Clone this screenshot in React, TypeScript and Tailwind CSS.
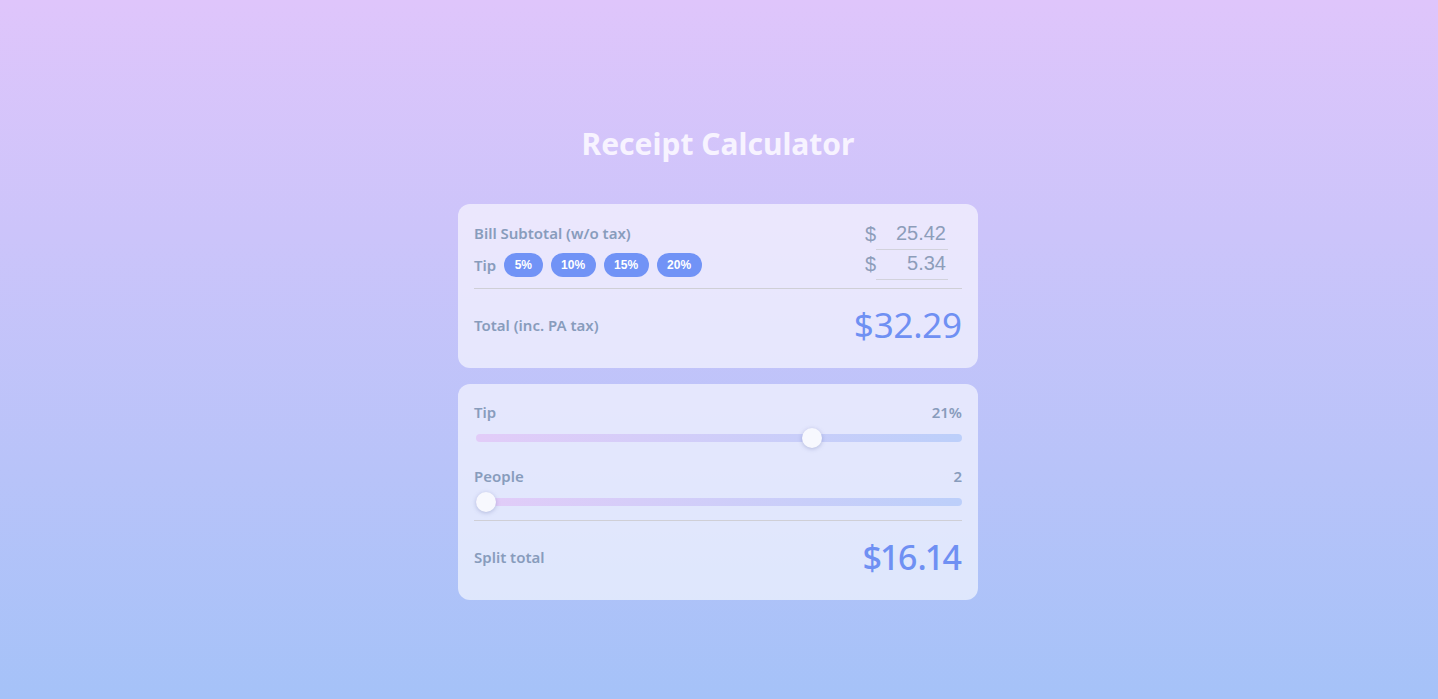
import { useState } from "react";

const TAX = 0.06;
const PRESETS = [5, 10, 15, 20];

const rangeCls =
  "ml-0.5 w-full h-2 rounded-full appearance-none cursor-pointer bg-[linear-gradient(to_right,#e2ccf8,#bccffa)] outline-none " +
  "[&::-webkit-slider-thumb]:appearance-none [&::-webkit-slider-thumb]:w-5 [&::-webkit-slider-thumb]:h-5 " +
  "[&::-webkit-slider-thumb]:rounded-full [&::-webkit-slider-thumb]:bg-[#f7f8fe] " +
  "[&::-webkit-slider-thumb]:shadow-[0_1px_4px_rgba(90,100,160,0.35)]";

export default function App() {
  const [subtotal, setSubtotal] = useState("25.42");
  const [tipPct, setTipPct] = useState(21);
  const [people, setPeople] = useState(2);

  const sub = parseFloat(subtotal) || 0;
  const tip = Math.round(sub * tipPct) / 100;
  const total = sub * (1 + TAX) + tip;
  const split = total / people;

  return (
    <div className="min-h-[699px] w-full bg-[linear-gradient(to_bottom,#dfc5fb,#a5c2f8)] font-['Noto_Sans',sans-serif] text-[#889cbc] flex flex-col items-center pt-[122px]">
      <h1 className="text-[30px] font-bold text-[#f7f3ff] leading-[44px] -translate-x-px">Receipt Calculator</h1>

      <div className="mt-[38px] w-[520px] flex flex-col gap-4 -translate-x-px">
        <div className="rounded-xl bg-white/60 px-4 pt-4">
          <div className="flex items-center justify-between h-[30px]">
            <span className="text-[15px] font-semibold -mt-1">Bill Subtotal (w/o tax)</span>
            <label className="flex items-center mr-[14px] font-['Liberation_Sans',Arial,sans-serif] text-[20px] text-[#8d9dba]">
              <span className="-mt-0.5">$</span>
              <input
                value={subtotal}
                onChange={(e) => setSubtotal(e.target.value)}
                className="w-[72px] h-[30px] pb-1 pr-0.5 bg-transparent text-right border-b border-[#d2d2dc] outline-none"
              />
            </label>
          </div>
          <div className="flex items-center justify-between h-[30px]">
            <div className="flex items-center gap-2">
              <span className="text-[15px] font-semibold">Tip</span>
              {PRESETS.map((p) => (
                <button
                  key={p}
                  onClick={() => setTipPct(p)}
                  className="h-6 px-[10.5px] rounded-full bg-[#7193f6] text-white text-[12px] font-bold font-['Liberation_Sans',Arial,sans-serif]"
                >
                  {p}%
                </button>
              ))}
            </div>
            <label className="flex items-center mr-[14px] font-['Liberation_Sans',Arial,sans-serif] text-[20px] text-[#8d9dba]">
              <span className="-mt-0.5">$</span>
              <input
                readOnly
                value={tip.toFixed(2)}
                className="w-[72px] h-[30px] pb-1 pr-0.5 bg-transparent text-right border-b border-[#d2d2dc] outline-none"
              />
            </label>
          </div>
          <div className="mt-2 border-t border-[#cfcfd6]" />
          <div className="flex items-center justify-between h-[79px] pb-1.5">
            <span className="text-[15px] font-semibold">Total (inc. PA tax)</span>
            <span className="text-[35px] text-[#6f90f3] proportional-nums">${total.toFixed(2)}</span>
          </div>
        </div>

        <div className="rounded-xl bg-white/60 px-4 pt-4">
          <div className="flex justify-between text-[15px] font-semibold leading-6">
            <span>Tip</span>
            <span>{tipPct}%</span>
          </div>
          <div className="mt-1 flex h-5 items-center">
            <input
              type="range"
              min={0}
              max={30}
              value={tipPct}
              onChange={(e) => setTipPct(+e.target.value)}
              className={rangeCls}
            />
          </div>
          <div className="mt-4 flex justify-between text-[15px] font-semibold leading-6">
            <span>People</span>
            <span>{people}</span>
          </div>
          <div className="mt-1 flex h-5 items-center">
            <input
              type="range"
              min={2}
              max={10}
              value={people}
              onChange={(e) => setPeople(+e.target.value)}
              className={rangeCls}
            />
          </div>
          <div className="mt-2 border-t border-[#cfcfd6]" />
          <div className="flex items-center justify-between h-[79px] pb-1.5">
            <span className="text-[15px] font-semibold">Split total</span>
            <span className="text-[34px] font-medium text-[#6f90f3] proportional-nums">${split.toFixed(2)}</span>
          </div>
        </div>
      </div>
    </div>
  );
}
